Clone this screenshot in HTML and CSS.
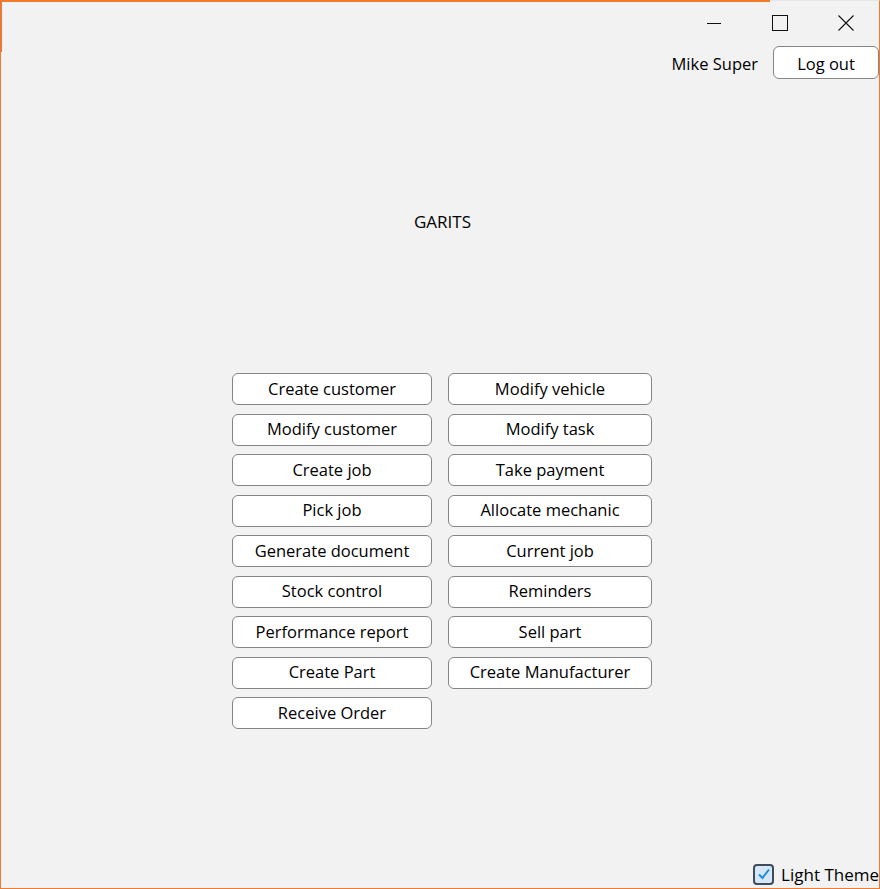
FILE: index.html
```html
<!DOCTYPE html>
<html>
<head>
<meta charset="utf-8">
<link rel="stylesheet" href="styles.css">
</head>
<body>
<div class="window">
  <div class="accent-top"></div>
  <div class="accent-left"></div>
  <div class="titlebar">
    <div class="ctl">
      <svg width="16" height="16" viewBox="0 0 16 16"><path d="M1 8.5 H15" stroke="#111" stroke-width="1"/></svg>
    </div>
    <div class="ctl">
      <svg width="16" height="16" viewBox="0 0 16 16"><rect x="0.5" y="0.5" width="15" height="15" fill="none" stroke="#111" stroke-width="1"/></svg>
    </div>
    <div class="ctl">
      <svg width="16" height="16" viewBox="0 0 16 16"><path d="M0.5 0.5 L15.5 15.5 M15.5 0.5 L0.5 15.5" stroke="#111" stroke-width="1.1"/></svg>
    </div>
  </div>
  <div class="userbar">
    <span class="username">Mike Super</span>
    <button class="btn logout">Log out</button>
  </div>
  <div class="title">GARITS</div>
  <div class="grid">
    <button class="btn">Create customer</button>
    <button class="btn">Modify vehicle</button>
    <button class="btn">Modify customer</button>
    <button class="btn">Modify task</button>
    <button class="btn">Create job</button>
    <button class="btn">Take payment</button>
    <button class="btn">Pick job</button>
    <button class="btn">Allocate mechanic</button>
    <button class="btn">Generate document</button>
    <button class="btn">Current job</button>
    <button class="btn">Stock control</button>
    <button class="btn">Reminders</button>
    <button class="btn">Performance report</button>
    <button class="btn">Sell part</button>
    <button class="btn">Create Part</button>
    <button class="btn">Create Manufacturer</button>
    <button class="btn">Receive Order</button>
  </div>
  <div class="footer">
    <label class="theme">
      <span class="check">
        <svg width="14" height="14" viewBox="0 0 14 14"><path d="M2 7.5 L5.5 11 L12 2.5" fill="none" stroke="#1f8ad8" stroke-width="2"/></svg>
      </span>
      <span>Light Theme</span>
    </label>
  </div>
</div>
</body>
</html>
```

FILE: styles.css
```css
* { box-sizing: border-box; }
html, body { margin: 0; padding: 0; }
body {
  font-family: "Open Sans", "Noto Sans", sans-serif;
  font-size: 16.5px;
  color: #000;
  background: #f2f2f2;
}
.window {
  position: relative;
  width: 880px;
  height: 889px;
  background: #f2f2f2;
  border-top: 1px solid #e6e6e6;
  border-left: 1px solid #f07a2e;
  border-right: 1px solid #f07a2e;
  border-bottom: 1px solid #f07a2e;
  display: flex;
  flex-direction: column;
}
.accent-top {
  position: absolute;
  top: -1px;
  left: -1px;
  width: 770px;
  height: 2px;
  background: #f07a2e;
}
.accent-left {
  position: absolute;
  top: 0;
  left: -1px;
  width: 2px;
  height: 51px;
  background: #e8793a;
}
.titlebar {
  display: flex;
  justify-content: flex-end;
  height: 45px;
}
.ctl {
  width: 66px;
  height: 45px;
  display: flex;
  align-items: center;
  justify-content: center;
  padding-bottom: 1px;
}
.userbar {
  display: flex;
  justify-content: flex-end;
  align-items: center;
  gap: 15px;
  height: 33px;
}
.username { font-size: 16.5px; padding-top: 1px; }
.btn {
  font-family: inherit;
  font-size: 16.5px;
  color: #000;
  background: #fff;
  border: 1px solid #858585;
  border-radius: 6px;
  height: 32px;
  padding: 0;
  line-height: 1;
}
.logout { width: 106px; height: 33px; padding-top: 3px; }
.title {
  text-align: center;
  margin-top: 131px;
  padding-left: 5px;
  font-size: 17px;
  line-height: 24px;
}
.grid {
  margin-top: 139px;
  display: grid;
  grid-template-columns: 200px 204px;
  column-gap: 16px;
  row-gap: 8.5px;
  justify-content: center;
  padding-left: 4px;
}
.footer {
  margin-top: auto;
  display: flex;
  justify-content: flex-end;
  height: 24px;
  margin-bottom: 2px;
}
.theme {
  display: flex;
  align-items: center;
  gap: 7px;
  font-size: 17px;
}
.check {
  width: 21px;
  height: 21px;
  border: 2px solid #3d4d5c;
  border-radius: 4px;
  background: #d6e8f7;
  display: flex;
  align-items: center;
  justify-content: center;
}
```
